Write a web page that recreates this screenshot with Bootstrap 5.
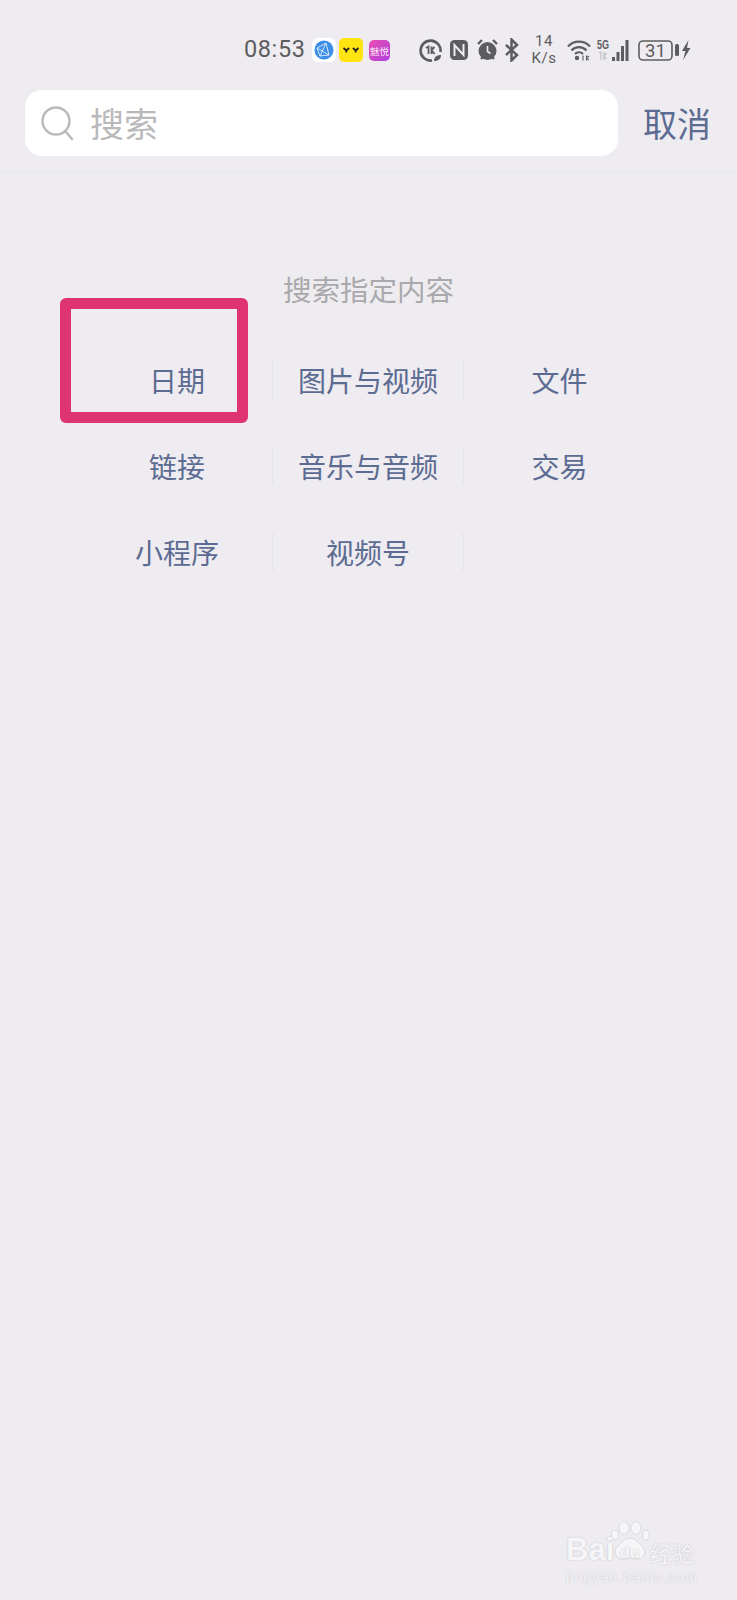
<!DOCTYPE html>
<html lang="zh-CN">
<head>
<meta charset="utf-8">
<title>搜索</title>
<link rel="stylesheet" href="https://cdn.jsdelivr.net/npm/bootstrap@5.3.0/dist/css/bootstrap.min.css">
<style>
html,body{height:1600px;overflow:hidden}
body{background:#eeecf0;font-family:"Noto Sans CJK SC","Liberation Sans",sans-serif;position:relative;width:737px}
.stat-bar{height:90px;padding:10px 0 0 244px;color:#5d5d60;font-family:Roboto,"Liberation Sans",sans-serif}
.stat-time{font-size:23.5px;width:62px;letter-spacing:.6px;line-height:1}
.stat-speed{font-size:15px;line-height:17px;width:26px;margin:0 10px 0 11px;text-align:center;letter-spacing:.5px}
.stat-bar svg{display:block;flex:none}
.m1{margin-left:6px}.m2{margin-left:3px}.m3{margin-left:6px}.m4{margin-left:29px}.m6{margin-left:8px}.m7{margin-left:6px}.m9{margin-left:8px}.m10{margin-left:2px}.m11{margin-left:2px}
.m5b{margin-left:7px}.m8b{margin-left:6px}
.srch-row{height:82px;padding:0 26px 0 25px;border-bottom:1px solid #e8e7eb}
.srch-box{width:593px;height:66px;background:#fff;border-radius:17px;padding-left:16px;margin-bottom:16px}
.srch-ph{font-size:34px;color:#b9b9bb;margin-left:15px;line-height:1}
.cancel-lnk{font-size:34px;color:#5c6b92;line-height:1;margin-bottom:16px}
.sec-head{margin-top:98px;font-size:28.5px;line-height:38px;color:#a9a9ab;text-align:center}
.opt-grid{width:573px;margin:53px 0 0 82px}
.opt-cell{height:86px;font-size:28px;color:#5c6b92}
.opt-sep{border-right:1px solid #e4e3e7;height:38px;width:100%;line-height:38px;text-align:center}
.opt-end{height:38px;line-height:38px;text-align:center;width:100%}
.mark-box{position:absolute;left:60px;top:298px;width:188px;height:125px;border:11px solid #de3472;border-radius:6px}
.wm{position:absolute;left:566px;top:1520px;width:140px;height:64px;color:#f6f5f8;text-shadow:0 0 1.500px rgba(90,90,95,.35)}
.wm-bai{position:absolute;left:0;top:15px;font:700 31px/30px "Liberation Sans",sans-serif}
.wm-du{position:absolute;left:54px;top:25px;font:700 16px/16px "Liberation Sans",sans-serif;color:#f6f5f8}
.wm-jy{position:absolute;left:84px;top:19px;font-size:22px;line-height:26px;letter-spacing:.5px}
.wm-url{position:absolute;left:0;top:49px;font:14.5px/16px "Liberation Sans",sans-serif;letter-spacing:.9px;white-space:nowrap}
</style>
</head>
<body>
<div class="stat-bar d-flex align-items-center">
  <div class="stat-time">08:53</div>
  <svg class="m1" width="24" height="24" viewBox="0 0 24 24"><rect width="24" height="24" rx="6" fill="#fff"/><circle cx="12" cy="12" r="9.5" fill="#3d8ee6"/><path d="M5 10l9-5 3 12-9 1zM5 10l12 7M14 5l-6 13" stroke="#d5e8fb" stroke-width="1" fill="none"/></svg>
  <svg class="m2" width="24" height="24" viewBox="0 0 24 24"><rect width="24" height="24" rx="5" fill="#ffe412"/><path d="M4.5 10l2.800 2.500 2.800-2.500M7.300 12.500v2M13.900 10l2.800 2.500 2.800-2.500M16.700 12.500v2" stroke="#222" stroke-width="1.8" fill="none"/></svg>
  <svg class="m3" width="21" height="21" viewBox="0 0 21 21"><defs><linearGradient id="pg" x1="0" y1="0" x2="1" y2="1"><stop offset="0" stop-color="#e84fb0"/><stop offset="1" stop-color="#b03fe0"/></linearGradient></defs><rect width="21" height="21" rx="5" fill="url(#pg)"/><text x="10.5" y="14.5" text-anchor="middle" font-family="Noto Sans CJK SC" font-size="9.5" fill="#fbe6f7">魅悦</text></svg>
  <svg class="m4" width="23" height="23" viewBox="0 0 23 23"><path d="M13 21.500A10 10 0 1 1 21.500 13" fill="none" stroke="#5d5d60" stroke-width="2.6"/><path d="M7 9l2.500-1.500V15M12.500 7.500V15M12.500 11l3-3M12.500 11l3 4" fill="none" stroke="#5d5d60" stroke-width="1.8"/><path d="M15 22c0-4 3-6 7-6 0 4-3 6-7 6z" fill="#5d5d60"/></svg>
  <svg class="m5b" width="20" height="22" viewBox="0 0 20 22"><rect x="1" y="1" width="18" height="20" rx="4.5" fill="#5d5d60"/><path d="M5.500 17V6l9 10V5" fill="none" stroke="#eeecf0" stroke-width="2"/></svg>
  <svg class="m6" width="21" height="22" viewBox="0 0 21 22"><circle cx="10.500" cy="12" r="9" fill="#5d5d60"/><path d="M10.500 7v5.500l3 2" fill="none" stroke="#eeecf0" stroke-width="1.6"/><path d="M1 5l4-4M20 5l-4-4M4 20l2-2M17 20l-2-2" stroke="#5d5d60" stroke-width="2.4"/></svg>
  <svg class="m8b" width="16" height="24" viewBox="0 0 16 24"><path d="M2 7l11 10-5.500 5.500V1.500L13 7 2 17" fill="none" stroke="#5d5d60" stroke-width="2.5"/></svg>
  <div class="stat-speed">14<br>K/s</div>
  <svg width="24" height="22" viewBox="0 0 24 22"><path d="M1 7.500a15 15 0 0 1 22 0M4.500 11.500a10 10 0 0 1 15 0M8 15a5.500 5.500 0 0 1 8 0" fill="none" stroke="#5d5d60" stroke-width="2.2"/><circle cx="10" cy="19" r="2.2" fill="#5d5d60"/><path d="M16 16.500v5M19.500 16.500v5M19.500 19l2.500-2M19.500 19l2.500 2" stroke="#5d5d60" stroke-width="1.1" fill="none"/></svg>
  <svg class="m7" width="33" height="25" viewBox="0 0 33 25"><text x="0" y="11" font-family="Liberation Sans" font-size="12" font-weight="700" fill="#5d5d60" textLength="12" lengthAdjust="spacingAndGlyphs">5G</text><rect x="15" y="19" width="3" height="4" fill="#5d5d60"/><rect x="19.5" y="14" width="3" height="9" fill="#5d5d60"/><rect x="24" y="8" width="3" height="15" fill="#5d5d60"/><rect x="28.5" y="2" width="3" height="21" fill="#5d5d60"/><path d="M2 15l2-1v8M7 14v8M7 18l2.500-3M7 18l2.500 3" fill="none" stroke="#c2c2c5" stroke-width="1.3"/></svg>
  <svg class="m9" width="35" height="21" viewBox="0 0 35 21"><rect x="1" y="1" width="33" height="19" rx="4" fill="none" stroke="#5d5d60" stroke-width="1.6"/><text x="17.5" y="17" text-anchor="middle" font-family="Roboto" font-size="18.5" fill="#5d5d60">31</text></svg>
  <svg class="m10" width="4" height="12" viewBox="0 0 4 12"><rect width="4" height="12" rx="1.5" fill="#5d5d60"/></svg>
  <svg class="m11" width="10" height="20" viewBox="0 0 10 20"><path d="M7.500 0L1 11h3.500L2 20l7.500-12H6z" fill="#5d5d60"/></svg>
</div>
<div class="srch-row d-flex justify-content-between align-items-center">
  <div class="srch-box d-flex align-items-center">
    <svg width="34" height="36" viewBox="0 0 34 36"><circle cx="15" cy="16" r="13.5" fill="none" stroke="#b9b9bb" stroke-width="2.4"/><path d="M25 27l6 7" stroke="#b9b9bb" stroke-width="2.4" stroke-linecap="round"/></svg>
    <span class="srch-ph">搜索</span>
  </div>
  <span class="cancel-lnk">取消</span>
</div>
<div class="sec-head">搜索指定内容</div>
<div class="opt-grid row g-0">
  <div class="col-4 opt-cell"><div class="opt-sep">日期</div></div>
  <div class="col-4 opt-cell"><div class="opt-sep">图片与视频</div></div>
  <div class="col-4 opt-cell"><div class="opt-end">文件</div></div>
  <div class="col-4 opt-cell"><div class="opt-sep">链接</div></div>
  <div class="col-4 opt-cell"><div class="opt-sep">音乐与音频</div></div>
  <div class="col-4 opt-cell"><div class="opt-end">交易</div></div>
  <div class="col-4 opt-cell"><div class="opt-sep">小程序</div></div>
  <div class="col-4 opt-cell"><div class="opt-sep">视频号</div></div>
  <div class="col-4 opt-cell"></div>
</div>
<div class="mark-box"></div>
<div class="wm">
  <div class="wm-bai">Bai</div>
  <svg class="position-absolute overflow-visible" style="left:44px;top:1px" width="40" height="42" viewBox="0 0 40 42"><g fill="#f6f5f8" stroke="#cfced3" stroke-width=".7"><ellipse cx="5" cy="14" rx="3.5" ry="5"/><ellipse cx="14" cy="7" rx="5" ry="6.5"/><ellipse cx="26" cy="7" rx="5" ry="6.5"/><ellipse cx="36" cy="14" rx="3.5" ry="5"/><path d="M20 17c6 0 8 5 13 9 4 5 1 13-6 12-3 0-5-1-7-1s-4 1-7 1c-7 1-10-7-6-12 5-4 7-9 13-9z"/></g></svg>
  <div class="wm-du">du</div>
  <div class="wm-jy">经验</div>
  <div class="wm-url">jingyan.baidu.com</div>
</div>
<script src="https://cdn.jsdelivr.net/npm/bootstrap@5.3.0/dist/js/bootstrap.bundle.min.js"></script>
</body>
</html>
